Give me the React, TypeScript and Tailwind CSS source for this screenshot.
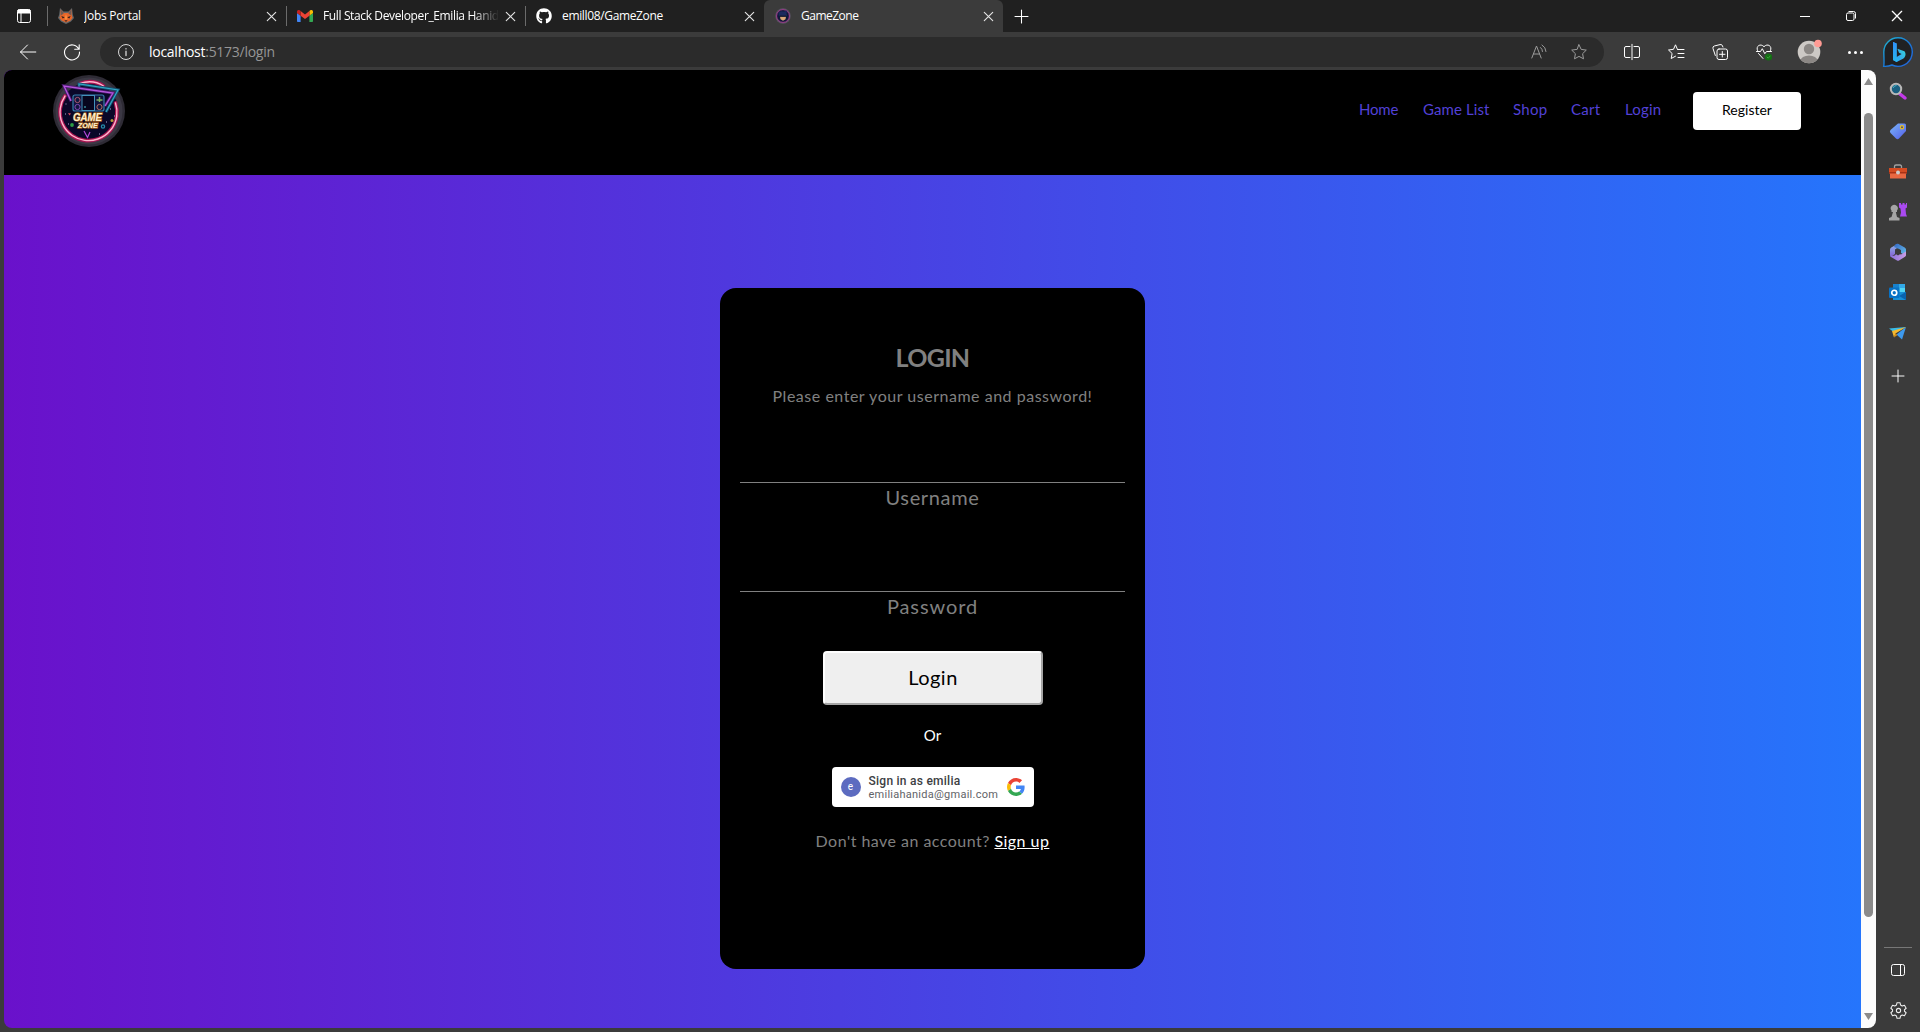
import React from "react";
import { FaGithub } from "react-icons/fa";

type P = { children?: React.ReactNode; className?: string };

/** 16-unit outline icon used across the browser chrome. */
function Line({ children, className = "size-4 text-white" }: P) {
  return (
    <svg viewBox="0 0 16 16" className={`block shrink-0 overflow-visible ${className}`} fill="none" stroke="currentColor" strokeWidth="1" strokeLinecap="round" strokeLinejoin="round">
      {children}
    </svg>
  );
}

function CloseX({ className = "size-[9px] text-[#e4e4e4]" }: P) {
  return (
    <Line className={className}>
      <path d="M0.5 0.5 15.5 15.5M15.5 0.5 0.5 15.5" strokeWidth="2" />
    </Line>
  );
}

const STAR = "M8 .8 10.2 5.4 15.3 6.1 11.6 9.7 12.5 14.8 8 12.4 3.5 14.8 4.4 9.7 .7 6.1 5.8 5.4Z";

function FoxIcon() {
  return (
    <svg viewBox="0 0 16 16" className="size-4 shrink-0">
      <path d="M2 0 5.500 3.500h5L14 0l.8 6.500 1.200 3.500-3 3.500L8 16 3 13.500 0 10l1.200-3.500z" fill="#62676a" />
      <path d="M2.800 1.500 6 5h4l3.200-3.500.4 5.500 1 2.800-2.100 2.700L8 14.500l-4.500-2-2.100-2.700 1-2.800z" fill="#e8662a" />
      <path d="M2.800 1.500 6 5 3.200 7.500zM13.200 1.500 10 5l2.800 2.500z" fill="#6e5a55" />
      <path d="m3.300 8 3.500 1.300-2.100 1.200zM12.700 8 9.200 9.300l2.100 1.200z" fill="#33211c" />
      <path d="m8 6 1.300 4L8 12.500 6.700 10z" fill="#ff8d3a" />
      <path d="M6.400 12.200h3.200L8 13.900z" fill="#3b2520" />
    </svg>
  );
}

function GmailIcon() {
  return (
    <svg viewBox="0 0 16 12" className="h-3 w-4 shrink-0">
      <path d="M1.100 12h2.500V5.800L0 3.100v7.800C0 11.500.5 12 1.100 12z" fill="#4285f4" />
      <path d="M12.400 12h2.500c.6 0 1.100-.5 1.100-1.100V3.100l-3.600 2.700z" fill="#34a853" />
      <path d="M12.400 1.100v4.700L16 3.100V1.600C16 .3 14.500-.5 13.400.3z" fill="#fbbc04" />
      <path d="M3.600 5.800V1.100L8 4.400l4.400-3.300v4.700L8 9.100z" fill="#ea4335" />
      <path d="M0 1.600v1.500l3.600 2.700V1.100L2.600.3C1.500-.5 0 .3 0 1.600z" fill="#c5221f" />
    </svg>
  );
}

function GamerIcon() {
  return (
    <svg viewBox="0 0 16 16" className="size-4 shrink-0">
      <circle cx="8" cy="8" r="7.700" fill="#5b5466" />
      <circle cx="8" cy="8" r="6.400" fill="#101838" stroke="#a23a8c" strokeWidth="1" />
      <path d="M5 8.500h6l-.5 2.800L8 12.800l-2.500-1.500z" fill="#d9a777" />
      <path d="M3.500 4.500 6 3.200l3 .3 3-1-.5 3.300.7 2.500-2.200-.6-2 .8-2-.8-2.200.6z" fill="#1b2a5e" />
      <path d="M4.500 7.600h7v1.200h-7z" fill="#151b31" />
    </svg>
  );
}

function Tab({ icon, title, titleClass, active, fade }: { icon: React.ReactNode; title: string; titleClass: string; active?: boolean; fade?: boolean }) {
  return (
    <div className={`flex h-8 w-[239px] shrink-0 items-center pl-[11px] ${active ? "rounded-t-[6px] bg-[#3b3b3b]" : ""}`}>
      {icon}
      <div className={`ml-[10px] w-[176px] overflow-hidden text-[12px] leading-4 whitespace-nowrap text-white ${titleClass} ${fade ? "[mask-image:linear-gradient(to_right,#000_150px,transparent_176px)]" : ""}`}>{title}</div>
      <CloseX className="ml-[7px] size-[9px] text-[#e4e4e4]" />
    </div>
  );
}

const Divider = () => <div className="-mr-px h-5 w-px shrink-0 bg-[#6b6b6b]" />;

function TabStrip() {
  return (
    <div className="flex h-8 items-center bg-[#202020]">
      <div className="flex w-[47px] shrink-0 justify-center">
        <svg viewBox="0 0 14 14" className="size-[14px] text-white" fill="none" stroke="currentColor">
          <rect x=".5" y=".5" width="13" height="13" rx="2" />
          <path d="M1 1h12v3H1z" fill="currentColor" />
          <path d="M4 4v9.500" />
        </svg>
      </div>
      <Divider />
      <Tab icon={<FoxIcon />} title="Jobs Portal" titleClass="tracking-[-0.28px]" />
      <Divider />
      <Tab icon={<GmailIcon />} title="Full Stack Developer_Emilia Hanida" titleClass="tracking-[-0.37px]" fade />
      <Divider />
      <Tab icon={<FaGithub className="size-4 shrink-0 text-white" />} title="emill08/GameZone" titleClass="tracking-[-0.35px]" />
      <Tab active icon={<GamerIcon />} title="GameZone" titleClass="tracking-[-0.5px]" />
      <Line className="ml-3 size-[13px] text-white"><path d="M8 0v16M0 8h16" strokeWidth="1.300" /></Line>
      <div className="ml-auto flex items-center gap-9 pr-[18px] text-white">
        <div className="h-px w-[10px] bg-white" />
        <svg viewBox="0 0 10 10" className="size-[10px] overflow-visible" fill="none" stroke="currentColor">
          <rect x=".5" y="2" width="7.500" height="7.500" rx="1.500" />
          <path d="M2.500.5h5A2 2 0 0 1 9.500 2.500v5" />
        </svg>
        <CloseX className="size-[10px]" />
      </div>
    </div>
  );
}

function BingIcon() {
  return (
    <svg viewBox="0 0 30 30" className="size-[30px] shrink-0 overflow-visible">
      <defs>
        <linearGradient id="bing-ring" x1="0" y1="0" x2="1" y2="1"><stop stopColor="#22b8cf" /><stop offset=".5" stopColor="#1879d8" /><stop offset="1" stopColor="#2463dc" /></linearGradient>
        <linearGradient id="bing-b" x1="0" y1="0" x2="0" y2="1"><stop stopColor="#2f91ff" /><stop offset="1" stopColor="#27b8ec" /></linearGradient>
        <linearGradient id="bing-bowl" x1="0" y1="1" x2="1" y2="0"><stop stopColor="#3488fb" /><stop offset="1" stopColor="#35e4d1" /></linearGradient>
      </defs>
      <path d="M15 .7A14.300 14.300 0 1 1 9 28c-2.500 1-5.500 1.500-8.300 1.300C1.300 27 1 24 .8 15A14.200 14.200 0 0 1 15 .7z" fill="#202124" stroke="url(#bing-ring)" strokeWidth="1.400" />
      <path d="m10 5 3.600 1.600V20l5-3-2.600-1.300-1.600-4 7 2.600c2.300 2.700.8 6.200-1.400 7.500L13.600 25 10 23z" fill="url(#bing-bowl)" />
      <path d="m10 5 3.600 1.600v13.800L17 22l-3.400 3L10 23z" fill="url(#bing-b)" />
    </svg>
  );
}

function Toolbar() {
  return (
    <div className="flex h-[38px] items-center bg-[#3b3b3b] pt-0.5 pl-5">
      <Line><path d="M.5 8h15.300M7.500 1 .5 8l7 7" /></Line>
      <Line className="ml-7 size-4 text-white"><path d="M14.800 5.200A7.500 7.500 0 1 0 15.500 8M15.200 .8v4.500h-4.500" strokeWidth="1.100" /></Line>
      <div className="mb-px ml-5 flex h-[30px] w-[1504px] items-center rounded-full bg-[#2b2b2b] pt-px pl-[18px]">
        <Line className="size-4 text-[#d8d8d8]"><circle cx="8" cy="8" r="7.500" /><path d="M8 7.200v4.300M8 4.600v.3" strokeWidth="1.300" /></Line>
        <div className="ml-[15px] text-[14px] leading-5 tracking-[-0.27px] text-[#969696]"><span className="text-white">localhost</span>:5173/login</div>
        <div className="ml-auto flex gap-6 pr-[17px] text-[#9b9b9b]">
          <Line className="size-4"><path d="M.8 14 5.500 2l4.700 12M2.500 10h6M9.500 3.500a5 5 0 0 1 2 4M11 1a8 8 0 0 1 4 6.500" /></Line>
          <Line className="size-4"><path d={STAR} /></Line>
        </div>
      </div>
      <div className="ml-5 flex items-center gap-7">
        <Line><path d="M6 2.500H2A1.500 1.500 0 0 0 .5 4v8A1.500 1.500 0 0 0 2 13.500h4M10 2.500h4A1.500 1.500 0 0 1 15.500 4v8a1.500 1.500 0 0 1-1.500 1.500h-4M8 .3v15.400" /></Line>
        <Line><path d="M9.500 5.500 7.500 .8 5.500 5.300.5 6l3.600 3.500-.9 5 4.300-2.300M10 5.500h6M10 9.500h6M10 13.500h6" /></Line>
        <Line><rect x="5" y="5" width="10.500" height="10.500" rx="2" /><path d="M10.300 7.500v5.500M7.500 10.300H13M3.300 11.500 1 4.500A2 2 0 0 1 2.300 2L8 .6A2 2 0 0 1 10.500 2l.4 1" /></Line>
        <Line>
          <path d="M1.500 6.500C-.5 2 4.500-1 8 2.700 11.500-1 16.500 2 14.500 6.500M.5 7.500h4L6.300 4.700l2.500 5 1.700-2.200h5M2.500 9.500l4.500 5" />
          <circle cx="12.500" cy="13" r="3.600" fill="#137013" stroke="none" />
          <path d="m11 13 1.200 1.200L14.200 12" stroke="#39a339" />
        </Line>
      </div>
      <svg viewBox="0 0 24 24" className="ml-[25px] size-6 shrink-0 overflow-visible">
        <clipPath id="avatar-clip"><circle cx="12" cy="12" r="11.300" /></clipPath>
        <g clipPath="url(#avatar-clip)"><rect width="24" height="24" fill="#cdc9c5" /><circle cx="12" cy="9" r="5.200" fill="#8b8784" /><ellipse cx="12" cy="21" rx="8.500" ry="5.500" fill="#8b8784" /></g>
        <circle cx="21" cy="3.500" r="3.800" fill="#ff9b94" />
      </svg>
      <div className="ml-[27px] flex gap-[3px]">
        <i className="size-[3px] rounded-full bg-white" /><i className="size-[3px] rounded-full bg-white" /><i className="size-[3px] rounded-full bg-white" />
      </div>
      <div className="mb-px ml-auto pr-[7px]"><BingIcon /></div>
    </div>
  );
}

function Logo() {
  return (
    <svg viewBox="0 0 72 72" className="size-[72px]" fill="none">
      <circle cx="36" cy="36" r="36" fill="#2e2b35" />
      <circle cx="36" cy="36" r="33.500" fill="#3b3844" />
      <circle cx="36" cy="37" r="29.500" fill="#0a0728" />
      <g strokeLinecap="round">
        <g stroke="#a91552" strokeWidth="3.800"><path d="M12 21A28.500 28.500 0 1 0 62.500 28" /><path d="M27 8.500Q40 4 50.500 11" /></g>
        <g stroke="#ffb4cb" strokeWidth="1.400"><path d="M12 21A28.500 28.500 0 1 0 62.500 28" /><path d="M27 8.500Q40 4 50.500 11" /></g>
      </g>
      <path d="M26 13v-4L65 15 53 37" stroke="#154b6c" strokeWidth="3" />
      <path d="M26 13v-4L65 15 53 37" stroke="#32a7c4" strokeWidth="1.200" />
      <path d="M18 26 11 11l49 7-8 13" stroke="#4b1c70" strokeWidth="3" />
      <path d="M18 26 11 11l49 7-8 13" stroke="#b556dc" strokeWidth="1.300" />
      <rect x="20" y="20" width="31" height="16" rx="2" fill="#11153d" stroke="#367fab" strokeWidth="1.200" />
      <rect x="29" y="20.500" width="12.500" height="15" fill="#07061e" stroke="#4390ba" />
      <circle cx="24.500" cy="25" r="2.600" stroke="#ad5770" /><circle cx="24.500" cy="32" r="2.600" stroke="#834ab5" /><circle cx="46.500" cy="32" r="2.600" stroke="#b06b60" />
      <path d="M46.500 22v5M43.500 25h6" stroke="#7bad62" strokeWidth="1.500" /><path d="M31 32h2" stroke="#4dcbd6" />
      <g fontFamily="'Liberation Sans', sans-serif" fontWeight="700" fontStyle="italic" fill="#fff0cc" stroke="#9a5a1c" strokeWidth="1.300" paintOrder="stroke" textAnchor="middle">
        <text x="34.500" y="45.500" fontSize="10.500" textLength="29" lengthAdjust="spacingAndGlyphs">GAME</text>
        <text x="34.800" y="52.700" fontSize="7.500" textLength="20" lengthAdjust="spacingAndGlyphs">ZONE</text>
      </g>
      <path d="m31 56 3.500 6.500L37 57" stroke="#b248d8" strokeWidth="1.200" />
      <circle cx="19" cy="50" r="1.900" fill="#2d9d45" /><circle cx="50" cy="51.500" r="1.600" stroke="#268caa" strokeWidth="1.300" /><circle cx="59" cy="45.500" r="1.500" fill="#b59a38" />
      <path d="m15 38 3 .5-1.500 2z" fill="#df4962" /><path d="M12.500 29h1M57 34h1M61 41h1M12 39h1M15 49h1M53 47h1M46 59h1" stroke="#b1abd2" />
    </svg>
  );
}

function GoogleG() {
  return (
    <svg viewBox="0 0 48 48" className="size-[18px]">
      <path fill="#EA4335" d="M24 9.500c3.540 0 6.710 1.220 9.210 3.600l6.850-6.850C35.900 2.380 30.470 0 24 0 14.620 0 6.510 5.380 2.560 13.220l7.980 6.190C12.430 13.720 17.740 9.500 24 9.500z" />
      <path fill="#4285F4" d="M46.980 24.550c0-1.570-.15-3.090-.38-4.550H24v9.020h12.940c-.58 2.960-2.260 5.480-4.780 7.180l7.730 6c4.510-4.180 7.090-10.360 7.090-17.650z" />
      <path fill="#FBBC05" d="M10.530 28.590c-.48-1.450-.76-2.990-.76-4.590s.27-3.140.76-4.590l-7.980-6.190C.92 16.460 0 20.120 0 24c0 3.880.92 7.540 2.560 10.780l7.970-6.190z" />
      <path fill="#34A853" d="M24 48c6.480 0 11.930-2.130 15.890-5.810l-7.730-6c-2.150 1.450-4.920 2.300-8.160 2.300-6.260 0-11.570-4.220-13.470-9.910l-7.980 6.190C6.510 42.620 14.620 48 24 48z" />
    </svg>
  );
}

function NavBar() {
  return (
    <header className="flex h-[105px] items-start bg-black pt-[5px] pr-[60px] pl-[49px]">
      <Logo />
      <nav className="mt-[22px] ml-auto flex text-[15px] leading-6 whitespace-nowrap text-[#5241d6]">
        <a className="w-16 tracking-[-0.2px]">Home</a>
        <a className="w-[90px] tracking-[0.1px]">Game List</a>
        <a className="w-[58px] tracking-[0.3px]">Shop</a>
        <a className="w-[54px] tracking-[0.3px]">Cart</a>
        <a className="w-[68px] tracking-[0.2px]">Login</a>
      </nav>
      <button className="mt-[17px] h-[38px] w-[108px] rounded-[4px] bg-white pb-[3px] text-[14px] text-black">Register</button>
    </header>
  );
}

function LoginCard() {
  return (
    <section className="mt-[113px] flex h-[681px] w-[425px] flex-col items-center rounded-2xl bg-black px-5 pt-[54px] text-[#808080]">
      <h2 className="text-[25px] leading-[30px] font-bold tracking-[-0.7px]">LOGIN</h2>
      <p className="mt-3 text-[16px] leading-6 tracking-[0.52px] whitespace-nowrap">Please enter your username and password!</p>
      <div className="h-[75px] w-full border-b border-[#808080]" />
      <label className="text-[20px] leading-7 tracking-[0.65px]">Username</label>
      <div className="h-[81px] w-full border-b border-[#808080]" />
      <label className="text-[20px] leading-7 tracking-[0.9px]">Password</label>
      <button className="mt-[31px] ml-px h-[54px] w-[220px] rounded-[4px] border-2 border-t-white border-r-[#a5a5a5] border-b-[#a5a5a5] border-l-white bg-[#efefef] pb-0.5 text-[20px] tracking-[0.5px] text-black">Login</button>
      <p className="mt-[18px] text-[15px] leading-6 text-white">Or</p>
      <div className="mt-5 flex h-10 w-[202px] items-center rounded-[4px] bg-white pl-[9px] font-['Roboto',sans-serif]">
        <div className="flex size-5 items-center justify-center rounded-full bg-[#5c6bc0] pb-px text-[10px] leading-none text-white">e</div>
        <div className="ml-2 w-[138px] whitespace-nowrap">
          <div className="text-[12px] leading-[14px] font-medium tracking-[0.25px] text-[#3c4043]">Sign in as emilia</div>
          <div className="text-[11px] leading-[13px] tracking-[0.25px] text-[#5f6368]">emiliahanida@gmail.com</div>
        </div>
        <GoogleG />
      </div>
      <p className="mt-[22px] text-[16px] leading-6 tracking-[0.47px] whitespace-nowrap">Don't have an account? <a className="text-white underline">Sign up</a></p>
    </section>
  );
}

function Scrollbar() {
  return (
    <div className="flex h-full w-[15px] flex-col items-center bg-[#fcfcfc]">
      <svg viewBox="0 0 9 7" className="mt-2 h-[7px] w-[9px]"><path d="M4.500 0 9 7H0z" fill="#8b8b8b" /></svg>
      <div className="mt-7 h-[804px] w-[9px] rounded-full bg-[#8b8b8b]" />
      <svg viewBox="0 0 9 7" className="mt-auto mb-2 h-[7px] w-[9px]"><path d="M0 0h9L4.500 7z" fill="#8b8b8b" /></svg>
    </div>
  );
}

function Side({ children }: P) {
  return <svg viewBox="0 0 18 18" className="size-[18px] shrink-0 overflow-visible">{children}</svg>;
}

function Sidebar() {
  return (
    <aside className="flex h-full w-11 flex-col items-center bg-[#3b3b3b] pt-3">
      <div className="flex flex-col items-center gap-[22.300px]">
        <Side>
          <path d="m11 12 5 4" stroke="#c239e8" strokeWidth="3.500" strokeLinecap="round" />
          <circle cx="7" cy="7" r="5.200" fill="#195f80" stroke="#b8b8b8" strokeWidth="2" /><path d="M4 6q1-2.500 3.500-2.500" stroke="#4bb5c8" fill="none" />
        </Side>
        <Side>
          <defs><linearGradient id="tag" x1="0" y1="0" x2="1" y2="1"><stop stopColor="#7bb7fa" /><stop offset="1" stopColor="#535de8" /></linearGradient></defs>
          <path d="M9 1.500h6.500a1.500 1.500 0 0 1 1.500 1.500v6L10 16.500q-1.500 1.300-3 0L1.500 11q-1.300-1.500 0-3z" fill="url(#tag)" />
          <circle cx="13" cy="5.300" r="1.600" fill="#4b4d83" stroke="#e8c020" strokeWidth="1.200" />
        </Side>
        <Side>
          <path d="M5.500 5V3.500A1.500 1.500 0 0 1 7 2h4a1.500 1.500 0 0 1 1.500 1.500V5" fill="none" stroke="#a2a2a2" strokeWidth="1.300" />
          <path d="M0 5h18v5.500H0z" fill="#d44b22" /><path d="M1 10h16v5.500H1z" fill="#e96842" /><path d="M0 9h18v1.500H0z" fill="#a83216" />
          <circle cx="9" cy="9.500" r="2" fill="#ccc" />
        </Side>
        <Side>
          <path d="M10 0h2v1.500h1.500V0h2v1.500H17V0h1v4.500l-1.500 1 .5 5.500 1 2.500h-7l1-4-.5-4-1.500-1z" fill="#a94af0" />
          <path d="M0 17.500v-2.500l2.500-1L4 9H2.500V7.500A3.500 3.500 0 1 1 8 7.500V9H6.800L8 14l2.500 1v2.500z" fill="#a5a5a5" />
        </Side>
        <Side>
          <defs>
            <linearGradient id="m-blue" x1="0" y1="0" x2="1" y2="1"><stop stopColor="#3266c4" /><stop offset="1" stopColor="#69c3ec" /></linearGradient>
            <linearGradient id="m-violet" x1="0" y1="0" x2="1" y2="0"><stop stopColor="#8a70dc" /><stop offset="1" stopColor="#c79be3" /></linearGradient>
            <linearGradient id="m-left" x1="0" y1="0" x2="0" y2="1"><stop stopColor="#8fb8ea" /><stop offset="1" stopColor="#8463d4" /></linearGradient>
          </defs>
          <path d="M9 .8 2.200 4.500Q1 5.300 1 6.500V12q0 1.500 1.500 1.500L6 11V6.500L11 3z" fill="url(#m-left)" />
          <path d="M6.500 1.200Q8 .2 9.500 1l6.200 3.500Q17 5.300 17 6.500v6L12 10V7L5 4z" fill="url(#m-blue)" />
          <path d="M1 12.500q5 1.500 7-2.500l4 1.500 5-3v3.500q0 1.200-1 1.800L10 17.500q-1 .5-2 0L2 14q-1-.7-1-1.500z" fill="url(#m-violet)" />
          <path d="m6 7.500 3-2 3 2v3L9 12.500l-3-2z" fill="#3b3b3b" />
        </Side>
        <Side>
          <path d="M4 1h12v8H4z" fill="#32a9e7" /><path d="M4 1h6v4H4z" fill="#1681ce" /><path d="M10 5h6v4h-6z" fill="#50d5f5" />
          <path d="M4 9h13v8H4z" fill="#178fd7" /><path d="m17 9-7 4 7 4z" fill="#0963ae" />
          <rect x="0" y="4.500" width="10.500" height="10.500" rx="1" fill="#0872c6" /><circle cx="5.250" cy="9.750" r="2.500" fill="none" stroke="#fff" strokeWidth="1.700" />
        </Side>
        <Side>
          <path d="M0 4.500 17 3 6 9z" fill="#39bce8" />
          <path d="M17 3 13 15.500 7.500 10.500z" fill="#3d99ee" />
          <path d="M3 7 17 3 6.500 9.500 5 13.500z" fill="#f5b82e" />
          <path d="M6.500 9.500 5 13.500 8.500 11z" fill="#d98e16" />
        </Side>
      </div>
      <Line className="mt-[28px] size-3 text-white"><path d="M8 0v16M0 8h16" strokeWidth="1.300" /></Line>
      <div className="mt-auto h-px w-7 bg-[#777]" />
      <svg viewBox="0 0 14 12" className="mt-4 h-3 w-[14px]" fill="none" stroke="#fff"><rect x=".5" y=".5" width="13" height="11" rx="2" /><path d="M9.500.5v11" /></svg>
      <Line className="mt-[26px] mb-[13px] size-[17px] text-[#eee]">
        <path d="m6.600.7-.5 2.100-1.600 1-2.100-.7L.8 5.900l1.600 1.400v1.400L.8 10.100l1.600 2.800 2.100-.7 1.600 1 .5 2.100h2.800l.5-2.100 1.600-1 2.100.7 1.600-2.800-1.600-1.400V7.300l1.600-1.400-1.600-2.800-2.100.7-1.600-1L9.400.7z" />
        <circle cx="8" cy="8" r="2" />
      </Line>
    </aside>
  );
}

export default function App() {
  return (
    <div className="flex h-[1032px] w-[1920px] flex-col overflow-hidden bg-[#3b3b3b] font-['Open_Sans',sans-serif]">
      <TabStrip />
      <Toolbar />
      <div className="flex min-h-0 flex-1">
        <div className="ml-1 flex h-[958px] w-[1872px] overflow-hidden rounded-[8px]">
          <main className="flex w-[1857px] flex-col bg-linear-to-r from-[#6a11cb] to-[#2575fc] [--tw-gradient-position:to_right] font-['Lato',sans-serif]">
            <NavBar />
            <div className="flex justify-center"><LoginCard /></div>
          </main>
          <Scrollbar />
        </div>
        <Sidebar />
      </div>
    </div>
  );
}
